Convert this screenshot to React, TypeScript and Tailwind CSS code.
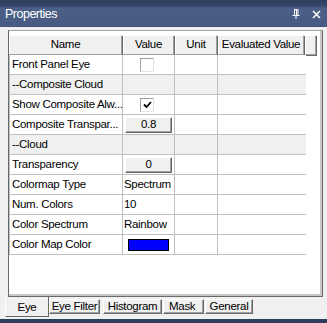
import React from "react";

const font = { fontFamily: '"Liberation Sans", Arial, sans-serif' };

type Row =
  | { kind: "group"; name: string }
  | { kind: "text"; name: string; value?: string }
  | { kind: "check"; name: string; checked: boolean }
  | { kind: "button"; name: string; value: string }
  | { kind: "color"; name: string };

const rows: Row[] = [
  { kind: "check", name: "Front Panel Eye", checked: false },
  { kind: "group", name: "--Composite Cloud" },
  { kind: "check", name: "Show Composite Alw...", checked: true },
  { kind: "button", name: "Composite Transpar...", value: "0.8" },
  { kind: "group", name: "--Cloud" },
  { kind: "button", name: "Transparency", value: "0" },
  { kind: "text", name: "Colormap Type", value: "Spectrum" },
  { kind: "text", name: "Num. Colors", value: "10" },
  { kind: "text", name: "Color Spectrum", value: "Rainbow" },
  { kind: "color", name: "Color Map Color" },
];

function HeaderCell({ w, label }: { w: string; label: string }) {
  return (
    <div
      className={`${w} h-[20px] shrink-0 flex items-center justify-center bg-[#f0f0f0] border border-t-white border-l-white border-r-[#a0a0a0] border-b-[#a0a0a0] shadow-[1px_1px_0_#696969] text-[11.5px] tracking-[-0.3px] text-black leading-none`}
    >
      {label}
    </div>
  );
}

function Checkbox({ checked }: { checked: boolean }) {
  return (
    <div className="w-[14px] h-[14px] bg-white border border-t-[#a0a0a0] border-l-[#a0a0a0] border-r-[#e3e3e3] border-b-[#e3e3e3] flex items-center justify-center">
      {checked && (
        <svg width="9" height="8" viewBox="0 0 9 8">
          <path d="M1 3.5 L3.5 6 L8 1" stroke="#000" strokeWidth="1.8" fill="none" />
        </svg>
      )}
    </div>
  );
}

function ValueButton({ value }: { value: string }) {
  return (
    <div className="w-[47px] h-[16px] bg-[#f0f0f0] border border-t-white border-l-white border-r-[#696969] border-b-[#696969] shadow-[inset_-1px_-1px_0_#a0a0a0] flex items-center justify-center text-[11.5px] leading-none text-black">
      {value}
    </div>
  );
}

const tabCls =
  "mt-[2px] h-[15px] border border-t-white border-l-white border-r-[#696969] border-b-[#696969] shadow-[inset_-1px_-1px_0_#a0a0a0] flex items-center";

export default function App() {
  return (
    <div className="w-[327px] h-[323px] flex flex-col bg-[#f0f0f0] overflow-hidden" style={font}>
      {/* Title bar */}
      <div className="h-[27px] shrink-0 flex items-center pl-[5px] pr-[6px] bg-[linear-gradient(to_bottom,#2f3e5e_0px,#35476b_6px,#4b5f87_8px,#475b82_26px,#3c4e72_27px)]">
        <span className="text-white text-[12.5px] tracking-[-0.5px] leading-none pt-[2px]">Properties</span>
        <div className="flex-1" />
        <svg width="10" height="12" viewBox="0 0 10 12" className="mr-[11px] mt-[1px]">
          <path d="M3 1.5 H7 V7 M3.5 1.5 V7 M1.5 7.5 H8.5 M5 8 V11" stroke="#ffffff" strokeWidth="1" fill="none" />
          <path d="M5.5 2 V7" stroke="#ffffff" strokeWidth="1" />
        </svg>
        <svg width="9" height="9" viewBox="0 0 9 9" className="mt-[1px]">
          <path d="M1 1 L8 8 M8 1 L1 8" stroke="#ffffff" strokeWidth="1.5" />
        </svg>
      </div>

      {/* Grid */}
      <div className="mt-[3px] ml-[8px] mr-[4px] h-[267px] shrink-0 bg-white border border-t-[#a0a0a0] border-l-[#696969] border-r-[#696969] border-b-[#696969] shadow-[inset_-2px_-2px_0_#c8c8c8] pt-[4px] flex flex-col">
        <div className="flex">
          <HeaderCell w="w-[113px]" label="Name" />
          <div className="w-[1px]" />
          <HeaderCell w="w-[51px]" label="Value" />
          <div className="w-[1px]" />
          <HeaderCell w="w-[42px]" label="Unit" />
          <div className="w-[1px]" />
          <HeaderCell w="w-[86px]" label="Evaluated Value" />
          <div className="w-[1px]" />
          <HeaderCell w="w-[11px]" label="" />
        </div>
        <div className="flex flex-col w-[297px] border-l border-[#c0c0c0]">
          {rows.map((r, i) => {
            const bg = r.kind === "group" ? "bg-[#f0f0f0]" : "bg-white";
            return (
              <div key={i} className={`flex h-[20px] border-b border-[#c0c0c0] ${bg} text-[11.5px] tracking-[-0.3px] text-black leading-none`}>
                <div className="w-[113px] shrink-0 border-r border-[#c0c0c0] flex items-center pl-[2px] whitespace-nowrap overflow-hidden">
                  {r.name}
                </div>
                <div className="w-[52px] shrink-0 border-r border-[#c0c0c0] flex items-center">
                  {r.kind === "check" && (
                    <div className="pl-[17px]">
                      <Checkbox checked={r.checked} />
                    </div>
                  )}
                  {r.kind === "button" && (
                    <div className="pl-[2px]">
                      <ValueButton value={r.value} />
                    </div>
                  )}
                  {r.kind === "text" && <span className="pl-[1px]">{r.value}</span>}
                  {r.kind === "color" && (
                    <div className="ml-[5px] w-[41px] h-[12px] bg-[#0000ff] border border-black" />
                  )}
                </div>
                <div className="w-[43px] shrink-0 border-r border-[#c0c0c0]" />
                <div className="flex-1" />
              </div>
            );
          })}
        </div>
      </div>

      {/* Tabs */}
      <div className="h-[22px] shrink-0 flex items-start pl-[5px] text-[11.5px] tracking-[-0.3px] leading-none text-black">
        <div className="w-[44px] h-[20px] bg-[#f0f0f0] border-l border-white border-r border-r-[#696969] border-b border-b-[#696969] flex items-end justify-center pb-[3px]">
          Eye
        </div>
        <div className={`${tabCls} ml-[0px] w-[51px] justify-center`}>Eye Filter</div>
        <div className={`${tabCls} ml-[3px] w-[59px] justify-center`}>Histogram</div>
        <div className={`${tabCls} ml-[1px] w-[41px] pl-[5px]`}>Mask</div>
        <div className={`${tabCls} ml-[1px] w-[48px] justify-center`}>General</div>
      </div>
      <div className="flex-1" />
      <div className="h-[4px] shrink-0 bg-[#2f3e5e]" />
    </div>
  );
}
